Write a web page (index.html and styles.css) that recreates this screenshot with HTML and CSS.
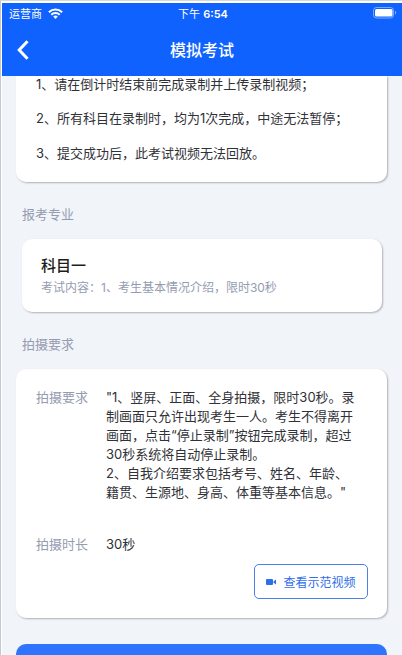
FILE: index.html
```html
<!DOCTYPE html>
<html lang="zh-CN">

<head>
    <meta charset="utf-8">
    <meta name="viewport" content="width=device-width, initial-scale=1">
    <title>模拟考试</title>
    <link rel="stylesheet" href="styles.css">
</head>

<body>
    <div class="app">
        <header class="header">
            <div class="status">
                <div class="carrier">
                    <span>运营商</span>
                    <svg width="15" height="11" viewBox="0 0 15 11" fill="none" stroke="#fff" stroke-width="2">
                        <path d="M.9 4.2a9.4 9.4 0 0 1 13.2 0M3.3 6.7a6 6 0 0 1 8.4 0"/>
                        <path d="M5.2 8.5a3.3 3.3 0 0 1 4.6 0L7.5 10.9z" fill="#fff" stroke="none"/>
                    </svg>
                </div>
                <div class="time">下午 <b>6:54</b></div>
                <div class="battery">
                    <svg width="24" height="12" viewBox="0 0 24 12">
                        <rect x=".5" y=".5" width="20" height="10.5" rx="3" fill="none" stroke="#fff" stroke-opacity=".45"/>
                        <rect x="2" y="2" width="17.5" height="7.5" rx="1.5" fill="#fff"/>
                        <path d="M22 3.8c1.6.6 1.6 3.3 0 3.9z" fill="#fff" fill-opacity=".5"/>
                    </svg>
                </div>
            </div>
            <nav class="nav">
                <button class="back" aria-label="返回">
                    <svg width="12" height="20" viewBox="0 0 12 20" fill="none" stroke="#fff" stroke-width="3">
                        <path d="M10.5 1.2L2.2 10l8.3 8.8"/>
                    </svg>
                </button>
                <h1>模拟考试</h1>
            </nav>
        </header>

        <main class="content">
            <div class="card notice">
                <p>1、请在倒计时结束前完成录制并上传录制视频；</p>
                <p>2、所有科目在录制时，均为1次完成，中途无法暂停；</p>
                <p>3、提交成功后，此考试视频无法回放。</p>
            </div>

            <h2 class="section-title">报考专业</h2>
            <div class="card subject">
                <h3>科目一</h3>
                <p>考试内容：1、考生基本情况介绍，限时30秒</p>
            </div>

            <h2 class="section-title">拍摄要求</h2>
            <div class="card require">
                <dl>
                    <div class="row">
                        <dt>拍摄要求</dt>
                        <dd>"1、竖屏、正面、全身拍摄，限时30秒。录制画面只允许出现考生一人。考生不得离开画面，点击“停止录制”按钮完成录制，超过30秒系统将自动停止录制。<br>2、自我介绍要求包括考号、姓名、年龄、籍贯、生源地、身高、体重等基本信息。"</dd>
                    </div>
                    <div class="row">
                        <dt>拍摄时长</dt>
                        <dd>30秒</dd>
                    </div>
                </dl>
                <button class="demo">
                    <svg width="11" height="8" viewBox="0 0 11 8" fill="#2f6ee8">
                        <rect x="0" y="1" width="7" height="6" rx="1"/>
                        <path d="M7.4 3.6L10 1.6v4.8L7.4 4.6z"/>
                    </svg>
                    <span>查看示范视频</span>
                </button>
            </div>

            <button class="submit" aria-label="开始考试"></button>
        </main>
    </div>
</body>

</html>
```
FILE: styles.css
```css
* {
    box-sizing: border-box;
    margin: 0;
    padding: 0;
}

body {
    font-family: Inter, "Noto Sans CJK SC", sans-serif;
    font-size: 13px;
    color: #303238;
    background: #fff;
}

button {
    font-family: inherit;
    border: none;
    background: none;
}

svg {
    display: block;
}

.app {
    display: flex;
    flex-direction: column;
    height: 100vh;
    padding: 2px 0 0 1px;
    border-top: 1px solid #d5d8dc;
    border-left: 1px solid #c6c8cc;
}

/* header */
.header {
    flex: none;
    color: #fff;
    background: #1062fe;
}

.status {
    display: flex;
    align-items: center;
    height: 20px;
    padding: 0 5px 0 7px;
    font-size: 11px;
}

.carrier,
.battery {
    display: flex;
    flex: 1;
    align-items: center;
    gap: 6px;
}

.battery {
    justify-content: flex-end;
}

.time b {
    font-weight: 600;
}

.nav {
    display: grid;
    grid-template-columns: 40px 1fr 40px;
    align-items: center;
    height: 53px;
}

.back {
    padding-left: 15px;
}

.nav h1 {
    font-size: 16px;
    font-weight: 500;
    line-height: 20px;
    text-align: center;
}

/* content */
.content {
    flex: 1;
    min-height: 0;
    padding: 0 15px 20px 14px;
    overflow: hidden;
    background: #f1f4f9;
}

.card {
    background: #fff;
    border-radius: 10px;
    box-shadow: 1px 1px 2px rgba(0, 0, 0, 0.28);
}

.notice {
    padding: 1px 20px 4px;
    border-radius: 0 0 10px 10px;
}

.notice p {
    padding-bottom: 15px;
    line-height: 20px;
}

.notice p:first-child {
    padding-bottom: 17px;
    line-height: 14px;
}

.section-title {
    padding: 7px 6px 0;
    font-size: 13px;
    font-weight: 400;
    line-height: 50px;
    color: #959cb0;
}

.subject {
    margin: 0 5px 0 6px;
    padding: 16px 19px 14px;
}

.subject h3 {
    font-size: 15px;
    font-weight: 500;
    line-height: 22px;
    color: #1c1d20;
}

.subject p {
    font-size: 12px;
    line-height: 21px;
    color: #959cb0;
}

.require {
    padding: 19px 19px 19px 20px;
}

.row {
    display: flex;
    gap: 18px;
    line-height: 19px;
    margin-bottom: 33px;
}

.row:last-child {
    margin-bottom: 10px;
}

.row dt {
    flex: none;
    color: #959cb0;
}

.row dd {
    flex: 1;
    padding-right: 11px;
}

.demo {
    display: flex;
    align-items: center;
    justify-content: center;
    gap: 6px;
    width: 114px;
    height: 35px;
    margin-left: auto;
    font-size: 12px;
    color: #2f6ee8;
    border: 1px solid #4a80e8;
    border-radius: 5px;
}

.submit {
    width: 100%;
    height: 44px;
    margin-top: 26px;
    background: #2f74ff;
    border-radius: 10px;
}
```
